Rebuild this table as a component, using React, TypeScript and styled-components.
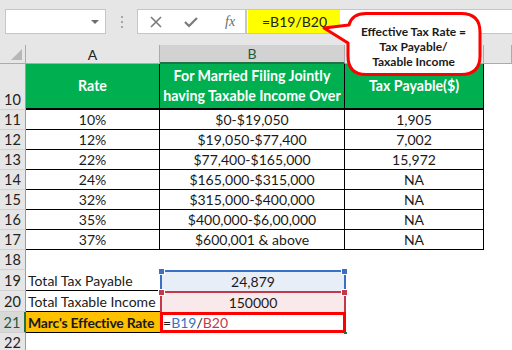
import React from "react";
import styled, { createGlobalStyle } from "styled-components";

const GlobalStyle = createGlobalStyle`
  html, body {
    margin: 0;
    padding: 0;
    background: #fff;
  }
  body {
    font-family: Lato, "Open Sans", sans-serif;
    color: #1a1a1a;
  }
`;

const Page = styled.div`
  position: relative;
  width: 512px;
  height: 350px;
  overflow: hidden;
  background: #fff;
`;

/* ---------- formula bar ---------- */

const FormulaBar = styled.div`
  height: 45px;
  box-sizing: border-box;
  padding: 9px 0 0 5px;
  background: #e6e6e6;
  display: flex;
  align-items: flex-start;
`;

const NameBox = styled.div`
  width: 101px;
  height: 25px;
  box-sizing: border-box;
  background: #fff;
  border: 1px solid #c6c6c6;
  display: flex;
  align-items: center;
  justify-content: flex-end;
  padding-right: 6px;
`;

const DropArrow = styled.span`
  width: 0;
  height: 0;
  border-left: 4px solid transparent;
  border-right: 4px solid transparent;
  border-top: 4px solid #6d6d6d;
`;

const Grip = styled.div`
  width: 2px;
  height: 25px;
  margin: 0 14px 0 15px;
  display: flex;
  flex-direction: column;
  justify-content: center;
  gap: 3px;
  span {
    width: 2px;
    height: 2px;
    background: #a5a5a5;
  }
`;

const ButtonBox = styled.div`
  width: 109px;
  height: 25px;
  box-sizing: border-box;
  background: #fff;
  border: 1px solid #c6c6c6;
  display: grid;
  grid-template-columns: repeat(3, 1fr);
  align-items: center;
  justify-items: center;
`;

const Fx = styled.span`
  font-family: "Liberation Serif", serif;
  font-style: italic;
  font-size: 14px;
  color: #6b6b6b;
  margin-left: 6px;
`;

const FormulaInput = styled.div`
  flex: 1;
  height: 25px;
  box-sizing: border-box;
  background: #fff;
  border: 1px solid #c6c6c6;
  border-right: none;
  padding-left: 1px;
  display: flex;
`;

const Highlight = styled.span`
  background: #ffff00;
  padding: 0 13px 0 14px;
  font-size: 14px;
  line-height: 23px;
  color: #222;
`;

/* ---------- sheet ---------- */

const Sheet = styled.div`
  display: grid;
  grid-template-columns: 26px 134px 185px 139px 1fr;
  grid-template-rows: 19px 46px repeat(8, 20px) repeat(3, 21px) 20px;
  font-size: 14px;
`;

const Corner = styled.div`
  position: relative;
  background: #e6e6e6;
  border-right: 1px solid #ababab;
  border-bottom: 1px solid #ababab;
  &::after {
    content: "";
    position: absolute;
    right: 3px;
    bottom: 3px;
    border-left: 11px solid transparent;
    border-bottom: 11px solid #b7b7b7;
  }
`;

const ColHeader = styled.div<{ $selected?: boolean }>`
  background: ${p => (p.$selected ? "#d2d2d2" : "#e6e6e6")};
  color: ${p => (p.$selected ? "#1d5b38" : "#222")};
  border-right: 1px solid #ababab;
  border-bottom: ${p => (p.$selected ? "2px solid #217346" : "1px solid #ababab")};
  display: flex;
  align-items: center;
  justify-content: center;
  font-size: 14px;
`;

const RowHeader = styled.div<{ $selected?: boolean; $bottom?: boolean }>`
  background: ${p => (p.$selected ? "#d9d9d9" : "#e6e6e6")};
  color: ${p => (p.$selected ? "#1d5b38" : "#222")};
  border-right: ${p => (p.$selected ? "2px solid #217346" : "1px solid #9c9c9c")};
  border-bottom: 1px solid #d0d0d0;
  box-sizing: border-box;
  display: flex;
  align-items: ${p => (p.$bottom ? "flex-end" : "center")};
  justify-content: center;
  padding-bottom: ${p => (p.$bottom ? "1px" : "0")};
  font-size: 14.5px;
`;

const HeadCell = styled.div`
  background: #00b050;
  color: #fff;
  font-weight: 700;
  font-size: 14.2px;
  text-align: center;
  line-height: 20px;
  border-right: 1px solid #000;
  border-bottom: 2px solid #000;
  display: flex;
  align-items: center;
  justify-content: center;
`;

const DataCell = styled.div`
  border-right: 1px solid #000;
  border-bottom: 1px solid #000;
  display: flex;
  align-items: center;
  justify-content: center;
  white-space: nowrap;
`;

const Blank = styled.div``;

const LabelCell = styled.div<{ $highlight?: boolean }>`
  background: ${p => (p.$highlight ? "#ffc000" : "#fff")};
  font-weight: ${p => (p.$highlight ? 700 : 400)};
  letter-spacing: ${p => (p.$highlight ? "-0.25px" : "0")};
  border-bottom: 1px solid #000;
  padding-left: 2px;
  display: flex;
  align-items: center;
  white-space: nowrap;
  overflow: hidden;
`;

const refTone = {
  blue: { bg: "#e8eef8", line: "#3a6fc8" },
  red: { bg: "#f9e9ea", line: "#c3394b" },
};

const RefCell = styled.div<{ $tone: "blue" | "red" }>`
  position: relative;
  background: ${p => refTone[p.$tone].bg};
  border: 2px solid ${p => refTone[p.$tone].line};
  border-bottom: none;
  margin-right: -1px;
  display: flex;
  align-items: center;
  justify-content: center;
`;

const Handle = styled.span<{ $tone: "blue" | "red"; $side: "left" | "right" }>`
  position: absolute;
  top: -4px;
  ${p => p.$side}: -4px;
  width: 5px;
  height: 5px;
  background: ${p => refTone[p.$tone].line};
  border: 1px solid #fff;
`;

const EditCell = styled.div`
  position: relative;
  border: 3px solid #ff0000;
  margin-right: -1px;
  display: flex;
  align-items: center;
  white-space: nowrap;
  &::after {
    content: "";
    position: absolute;
    right: -4px;
    bottom: -4px;
    width: 3px;
    height: 2px;
    background: #217346;
  }
`;

const Ref = styled.span<{ $tone: "blue" | "red" }>`
  color: ${p => refTone[p.$tone].line};
`;

/* ---------- callout ---------- */

const Callout = styled.svg`
  position: absolute;
  left: 320px;
  top: 10px;
`;

const CalloutText = styled.div`
  position: absolute;
  left: 347px;
  top: 24px;
  width: 133px;
  text-align: center;
  font-size: 12px;
  font-weight: 700;
  line-height: 15px;
  color: #1a1a1a;
`;

const rates = [
  ["10%", "$0-$19,050", "1,905"],
  ["12%", "$19,050-$77,400", "7,002"],
  ["22%", "$77,400-$165,000", "15,972"],
  ["24%", "$165,000-$315,000", "NA"],
  ["32%", "$315,000-$400,000", "NA"],
  ["35%", "$400,000-$6,00,000", "NA"],
  ["37%", "$600,001 & above", "NA"],
];

export default function App() {
  return (
    <Page>
      <GlobalStyle />
      <FormulaBar>
        <NameBox>
          <DropArrow />
        </NameBox>
        <Grip>
          <span />
          <span />
          <span />
        </Grip>
        <ButtonBox>
          <svg width="14" height="14" viewBox="0 0 14 14">
            <path d="M2 2 L12 12 M12 2 L2 12" stroke="#7a7a7a" strokeWidth="1.6" />
          </svg>
          <svg width="16" height="14" viewBox="0 0 16 14">
            <path d="M2 7 L6 11 L14 3" stroke="#7a7a7a" strokeWidth="2.2" fill="none" />
          </svg>
          <Fx>fx</Fx>
        </ButtonBox>
        <FormulaInput>
          <Highlight>=B19/B20</Highlight>
        </FormulaInput>
      </FormulaBar>

      <Sheet>
        <Corner />
        <ColHeader>A</ColHeader>
        <ColHeader $selected>B</ColHeader>
        {/* column C's letter sits under the callout */}
        <ColHeader />
        <ColHeader />

        <RowHeader $bottom>10</RowHeader>
        <HeadCell>Rate</HeadCell>
        <HeadCell>
          For Married Filing Jointly
          <br />
          having Taxable Income Over
        </HeadCell>
        <HeadCell>Tax Payable($)</HeadCell>
        <Blank />

        {rates.map((r, i) => (
          <React.Fragment key={r[0]}>
            <RowHeader>{11 + i}</RowHeader>
            <DataCell>{r[0]}</DataCell>
            <DataCell>{r[1]}</DataCell>
            <DataCell>{r[2]}</DataCell>
            <Blank />
          </React.Fragment>
        ))}

        <RowHeader>18</RowHeader>
        <Blank />
        <Blank />
        <Blank />
        <Blank />

        <RowHeader>19</RowHeader>
        <LabelCell>Total Tax Payable</LabelCell>
        <RefCell $tone="blue">
          <Handle $tone="blue" $side="left" />
          <Handle $tone="blue" $side="right" />
          24,879
        </RefCell>
        <Blank />
        <Blank />

        <RowHeader>20</RowHeader>
        <LabelCell>Total Taxable Income</LabelCell>
        <RefCell $tone="red">
          <Handle $tone="red" $side="left" />
          <Handle $tone="red" $side="right" />
          150000
        </RefCell>
        <Blank />
        <Blank />

        <RowHeader $selected>21</RowHeader>
        <LabelCell $highlight>Marc's Effective Rate</LabelCell>
        <EditCell>
          =<Ref $tone="blue">B19</Ref>/<Ref $tone="red">B20</Ref>
        </EditCell>
        <Blank />
        <Blank />

        <RowHeader>22</RowHeader>
        <Blank />
        <Blank />
        <Blank />
        <Blank />
      </Sheet>

      <Callout width="166" height="70" viewBox="0 0 166 70">
        <path
          d="M46 3.5 H141 Q160 3.5 160 22 V46 Q160 64.5 141 64.5 H46 Q28 64.5 28 46 V33 L4 18 L29 15 Q32 3.5 46 3.5 Z"
          fill="#fff"
          stroke="#ff0000"
          strokeWidth="3"
          strokeLinejoin="round"
        />
      </Callout>
      <CalloutText>
        Effective Tax Rate =
        <br />
        Tax Payable/
        <br />
        Taxable Income
      </CalloutText>
    </Page>
  );
}
